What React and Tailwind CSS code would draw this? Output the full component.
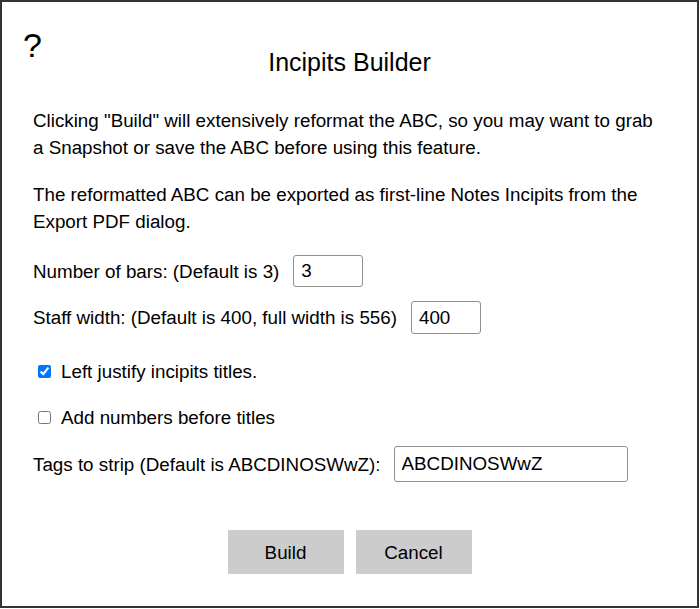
export default function App() {
  const font = { fontFamily: '"Liberation Sans", Arial, sans-serif' };
  return (
    <div
      className="w-[699px] h-[608px] border-2 border-[#333] bg-white text-black box-border"
      style={font}
    >
      <div className="grid grid-cols-[1fr_auto_1fr] pt-[26px] px-[21px]">
        <div className="text-[34px] leading-none">?</div>
        <div className="text-[25px] leading-none mt-[22px]">Incipits Builder</div>
        <div />
      </div>
      <div className="px-[31px] text-[18.8px] leading-[27px]">
        <p className="mt-[32px]">
          Clicking "Build" will extensively reformat the ABC, so you may want to grab a Snapshot or save the ABC before using this feature.
        </p>
        <p className="mt-[20px]">
          The reformatted ABC can be exported as first-line Notes Incipits from the Export PDF dialog.
        </p>
        <div className="mt-[20px] flex items-center">
          <span>Number of bars: (Default is 3)</span>
          <input
            defaultValue="3"
            className="ml-[14px] w-[70px] h-[32px] border border-[#8f8f8f] rounded-[3px] px-[7px] text-[18.8px] outline-none"
            style={font}
          />
        </div>
        <div className="mt-[14px] flex items-center">
          <span>Staff width: (Default is 400, full width is 556)</span>
          <input
            defaultValue="400"
            className="ml-[14px] w-[70px] h-[33px] border border-[#8f8f8f] rounded-[3px] px-[7px] text-[18.8px] outline-none"
            style={font}
          />
        </div>
        <label className="mt-[24px] flex items-center">
          <input type="checkbox" defaultChecked className="ml-[5px] w-[13px] h-[13px] accent-[#0075ff] m-0" />
          <span className="ml-[10px]">Left justify incipits titles.</span>
        </label>
        <label className="mt-[19px] flex items-center">
          <input type="checkbox" className="ml-[5px] w-[13px] h-[13px] m-0" />
          <span className="ml-[10px]">Add numbers before titles</span>
        </label>
        <div className="mt-[15px] flex items-center">
          <span>Tags to strip (Default is ABCDINOSWwZ):</span>
          <input
            defaultValue="ABCDINOSWwZ"
            className="ml-[13px] w-[234px] h-[36px] border border-[#8f8f8f] rounded-[3px] px-[7px] text-[18.8px] outline-none"
            style={font}
          />
        </div>
        <div className="mt-[48px] flex justify-center gap-[12px]">
          <button className="w-[116px] h-[44px] bg-[#cccccc] text-[18.8px]" style={font}>Build</button>
          <button className="w-[116px] h-[44px] bg-[#cccccc] text-[18.8px]" style={font}>Cancel</button>
        </div>
      </div>
    </div>
  );
}
